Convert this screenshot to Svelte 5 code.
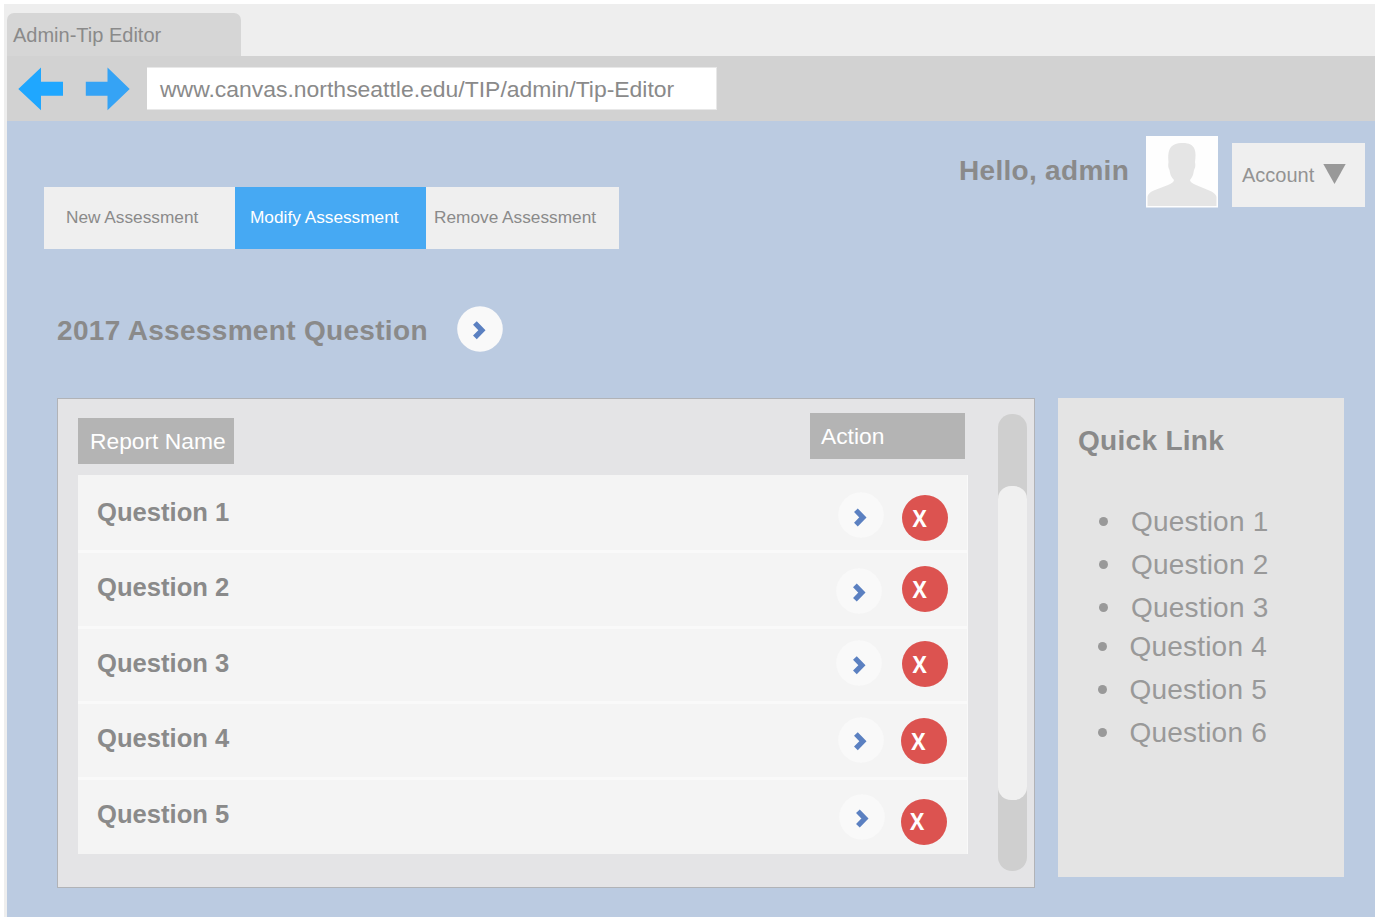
<script>
  const menu = ['New Assessment', 'Modify Assessment', 'Remove Assessment'];

  // open / remove: nudges of each button inside its row; arrow / cross: nudges of the glyph inside the button
  const questions = [
    { name: 'Question 1', open: [0, 17], arrow: [0, 2.5], remove: [1, 20], cross: [-5.3, -0.8] },
    { name: 'Question 2', open: [-2, 17.3], arrow: [1, 1.7], remove: [1, 16], cross: [-5.3, -0.8] },
    { name: 'Question 3', open: [-2, 14.6], arrow: [1, 2.3], remove: [1, 14.8], cross: [-5.3, -0.8] },
    { name: 'Question 4', open: [0, 15.9], arrow: [0, 1.3], remove: [0, 16.5], cross: [-5.7, -0.8] },
    { name: 'Question 5', open: [1, 17.2], arrow: [1, 1.6], remove: [0, 22.8], cross: [-7, -1.3] }
  ];

  const links = ['Question 1', 'Question 2', 'Question 3', 'Question 4', 'Question 5', 'Question 6'];
</script>

{#snippet chevron(dx, dy)}
  <svg class="round" viewBox="0 0 46 46">
    <circle cx="23" cy="23" r="22.8" fill="#f9f9f9" />
    <path
      d="M17.9 15.7 L24.9 22.9 L17.9 30.1"
      transform="translate({dx} {dy})"
      fill="none"
      stroke="#5b80c1"
      stroke-width="5.2"
    />
  </svg>
{/snippet}

<div class="window">
  <div class="tabstrip"><div class="tab">Admin-Tip Editor</div></div>
  <div class="toolbar">
    <svg class="nav" viewBox="0 0 46 44"><path d="M0.3 22 L23 0.5 V14.8 H45 V28.8 H23 V43.2 Z" fill="#1fa7ff" /></svg>
    <svg class="nav" viewBox="0 0 46 44"><path d="M44.7 22 L22.5 0.5 V14.8 H0.8 V28.8 H22.5 V43.2 Z" fill="#35a3f5" /></svg>
    <div class="url">www.canvas.northseattle.edu/TIP/admin/Tip-Editor</div>
  </div>

  <div class="page">
    <div class="top">
      <nav>
        {#each menu as item, i}
          <div class="item" class:active={i === 1}>{item}</div>
        {/each}
      </nav>
      <div class="user">
        <div class="hello">Hello, admin</div>
        <svg class="avatar" viewBox="0 0 72 72">
          <rect width="72" height="71.5" fill="#fefefe" />
          <path
            d="M1.5 70 V61 C2 58 4 56 9 54 L22 49 C26 47 28 46 28 44 C25 41 24 38 23.5 34 C22 32 22 29 22.5 26 C22 20 22 15 25 11 C28 7.500 33 6.500 37 7 C43 7 47 9 48.500 13 C50 17 49.500 21 49 26 C49.700 29 49.300 32 48 34 C47.500 38 46.500 41 44 44 C44 46 46 47 50 49 L62 54 C67 56 70 58 70.500 61 V70 Z"
            fill="#e5e5e5"
          />
        </svg>
        <div class="account">
          Account
          <svg viewBox="0 0 23 20"><path d="M0.3 0 H22.7 L11.5 20 Z" fill="#999" /></svg>
        </div>
      </div>
    </div>

    <div class="title">
      <h1>2017 Assessment Question</h1>
      {@render chevron(0, 1.3)}
    </div>

    <div class="columns">
      <section class="report">
        <div class="table">
          <div class="head">
            <div class="label name">Report Name</div>
            <div class="label action">Action</div>
          </div>
          <div class="rows">
            {#each questions as q}
              <div class="row">
                <div class="question">{q.name}</div>
                <div class="slot" style="padding: {q.open[1]}px 0 0 {q.open[0] + 2}px">
                  {@render chevron(q.arrow[0], q.arrow[1])}
                </div>
                <div class="slot" style="padding: {q.remove[1]}px 0 0 {q.remove[0]}px">
                  <div class="remove">
                    <span style="transform: translate({q.cross[0]}px, {q.cross[1]}px) scale(0.97, 1.04)">X</span>
                  </div>
                </div>
              </div>
            {/each}
          </div>
        </div>
        <div class="scroll"><div class="thumb"></div></div>
      </section>

      <aside>
        <h2>Quick Link</h2>
        <ul>
          {#each links as link, i}
            <li class:late={i > 2}><i></i>{link}</li>
          {/each}
        </ul>
      </aside>
    </div>
  </div>
</div>

<style>
  :global(body) {
    background: #fff;
    overflow: hidden;
  }
  .window {
    box-sizing: border-box;
    width: 1371px;
    height: 913px;
    margin: 4px 0 0 4px;
    padding-left: 3px;
    background: #eee;
    color: #8a8a8a;
    font-family: 'Liberation Sans', Arial, sans-serif;
    display: flow-root;
  }
  .tabstrip {
    height: 43px;
    padding-top: 9px;
  }
  .tab {
    box-sizing: border-box;
    width: 234px;
    height: 43px;
    padding-left: 6px;
    border-radius: 7px 7px 0 0;
    background: #d6d6d6;
    font-size: 20px;
    line-height: 45px;
  }
  .toolbar {
    display: flex;
    height: 65px;
    box-sizing: border-box;
    padding: 11px 0 0 11px;
    background: #d2d2d2;
  }
  .nav {
    width: 46px;
    height: 44px;
    margin-right: 21px;
  }
  .nav + .nav {
    margin-right: 16px;
  }
  .url {
    box-sizing: border-box;
    width: 570px;
    height: 43px;
    padding-left: 13px;
    background: #fff;
    border: 1px solid #e8e8e8;
    border-left: 0;
    font-size: 22.95px;
    line-height: 42px;
    white-space: nowrap;
  }
  .page {
    height: 796px;
    background: #bbcbe1;
    overflow: hidden;
  }
  .top {
    display: flex;
    justify-content: space-between;
    height: 128px;
    padding: 0 10.5px 0 37px;
  }
  nav {
    display: grid;
    grid-template-columns: 191px 191px 192.5px;
    height: 62px;
    margin-top: 66px;
  }
  .item {
    padding-left: 22px;
    background: #efefef;
    font-size: 17.25px;
    line-height: 61px;
    white-space: nowrap;
  }
  .item.active {
    padding-left: 15px;
    background: #46a9f3;
    color: #fff;
  }
  .item.active + .item {
    padding-left: 8px;
  }
  .user {
    display: flex;
    align-items: flex-start;
  }
  .hello {
    width: 187px;
    margin-top: 30px;
    font-size: 28px;
    font-weight: bold;
    line-height: 40px;
    letter-spacing: 0.3px;
    white-space: nowrap;
  }
  .avatar {
    width: 72px;
    height: 72px;
    margin: 14.5px 14px 0 0;
  }
  .account {
    display: flex;
    box-sizing: border-box;
    width: 132.5px;
    height: 64px;
    margin-top: 22px;
    padding-left: 10px;
    background: #efefef;
    font-size: 20px;
    line-height: 64px;
    color: #939393;
  }
  .account svg {
    width: 23px;
    height: 20px;
    margin: 21px 0 0 9px;
  }
  .title {
    display: flex;
    align-items: flex-start;
    height: 92px;
    padding: 57px 0 0 50px;
  }
  h1 {
    width: 399.5px;
    margin: 4px 0 0;
    font-size: 28px;
    line-height: 41px;
    letter-spacing: 0.32px;
    white-space: nowrap;
  }
  .round {
    display: block;
    flex: none;
    width: 46px;
    height: 46px;
  }
  .columns {
    display: flex;
    gap: 23px;
    padding-left: 50px;
  }
  .report {
    display: flex;
    box-sizing: border-box;
    width: 978px;
    height: 490px;
    border: 1.5px solid #b1b3b7;
    background: #e4e4e6;
    padding: 0 7px 0 20px;
    justify-content: space-between;
  }
  .table {
    width: 890px;
  }
  .head {
    display: flex;
    justify-content: space-between;
    height: 76px;
    padding-right: 3px;
  }
  .label {
    box-sizing: border-box;
    height: 46px;
    background: #b4b4b4;
    color: #fff;
    font-size: 22.8px;
    line-height: 46px;
    white-space: nowrap;
  }
  .name {
    width: 156px;
    margin-top: 19px;
    padding-left: 12px;
  }
  .action {
    width: 155px;
    margin-top: 13.5px;
    padding-left: 11px;
  }
  .rows {
    display: grid;
    grid-template-rows: repeat(4, 75.4px) 77px;
    background: #f4f4f4;
  }
  .row {
    display: grid;
    grid-template-columns: 758px 65px 1fr;
    box-sizing: border-box;
    border-right: 1px solid #f9f9f9;
    background: linear-gradient(#f9f9f9 3px, transparent 3px);
  }
  .row:first-child {
    background: none;
  }
  .question {
    padding-left: 19px;
    font-size: 25.6px;
    font-weight: bold;
    line-height: 74px;
  }
  .slot {
    height: 0;
  }
  .remove {
    width: 46px;
    height: 46px;
    border-radius: 50%;
    background: #dc5350;
    color: #fff;
    font: bold 22px/46px 'Open Sans', sans-serif;
    text-align: center;
  }
  .remove span {
    display: block;
  }
  .scroll {
    box-sizing: border-box;
    width: 29px;
    height: 457px;
    margin-top: 15px;
    padding-top: 72px;
    border-radius: 14px;
    background: #cfcfcf;
  }
  .thumb {
    height: 314px;
    border-radius: 13px;
    background: #f0f0f0;
  }
  aside {
    box-sizing: border-box;
    width: 285.5px;
    height: 478.500px;
    padding: 22px 0 0 20px;
    background: #e4e4e4;
  }
  h2 {
    margin: 0;
    font-size: 28px;
    line-height: 41px;
    letter-spacing: 0.3px;
  }
  ul {
    margin: 39px 0 0;
    padding: 0;
    list-style: none;
    color: #999;
    font-size: 28px;
    letter-spacing: 0.2px;
  }
  li {
    display: flex;
    align-items: center;
    height: 43px;
    padding-left: 21px;
  }
  li.late {
    padding-left: 19.5px;
  }
  li:nth-child(4) {
    margin-top: -4px;
  }
  li i {
    width: 9px;
    height: 9px;
    margin-right: 23px;
    border-radius: 50%;
    background: #999;
  }
</style>
